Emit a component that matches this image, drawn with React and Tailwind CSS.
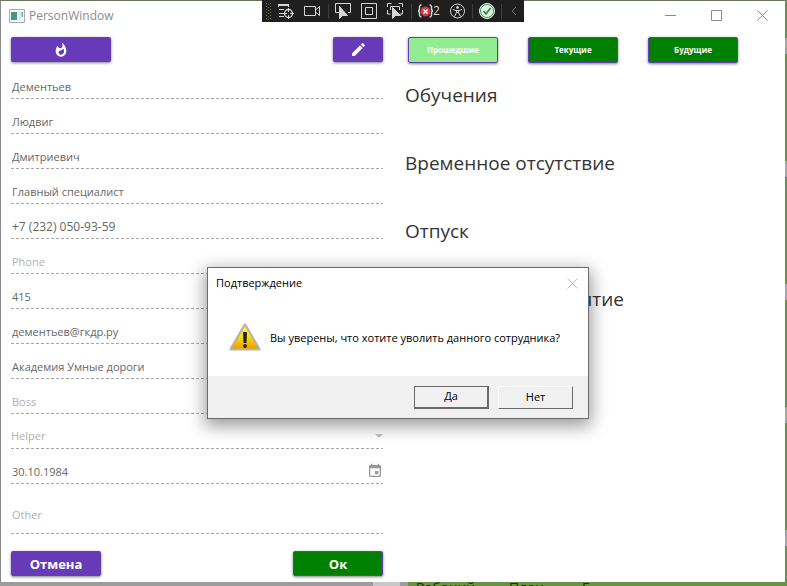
import React from "react";
import { MdWhatshot, MdEdit, MdInsertInvitation } from "react-icons/md";

const line =
  "h-px bg-[repeating-linear-gradient(90deg,#a8a8a8_0_3px,transparent_3px_5px)]";
const box = "h-5 w-full min-w-0 bg-transparent pl-px text-[#666] outline-none placeholder:text-[#b0b0b0]";

function Field({ label, value = "", type = "text", tall = false, children }) {
  return (
    <div className={tall ? "flex h-[50px] flex-col" : "flex h-[35px] flex-col"}>
      <div className={tall ? "flex flex-1 items-center pt-[11px]" : "flex flex-1 items-end pb-[2px]"}>
        {children || (
          <input
            type={type}
            aria-label={label}
            defaultValue={value}
            placeholder={label}
            className={`${box} ${type === "tel" ? "text-[12px]" : "text-[11px]"}`}
          />
        )}
      </div>
      <div className={line} />
    </div>
  );
}

function DebugToolbar() {
  return (
    <div className="absolute top-0 left-[262px] h-[22px] w-[262px] bg-[#1f1f1f]">
      <svg viewBox="0 0 262 22" className="h-full w-full" fill="none" stroke="#d6d6d6">
        <g stroke="#6b6b55" strokeDasharray="1 2">
          <path d="M4.5 3v17M8.5 3v17" />
          <path d="M6.5 4v16" />
        </g>
        <path d="M16.500 5.500h10M17 9.500h5M17 13.500h4M17 16.500h5M16.500 4v3M26.500 4v3" />
        <path d="M17 5h9" strokeWidth="2" />
        <circle cx="26.500" cy="13.500" r="4" strokeWidth="1.300" />
        <path d="M26.500 8v4M26.500 15v4M21 13.500h4M28 13.500h4" />
        <path d="M42.500 6.500h11v9h-11zM53.500 10l4-3.500v9l-4-3.500" />
        <path d="M66.500 4v15M149.500 4v15M210.500 4v15M239.500 4v15" stroke="#3d3d3d" />
        <path d="M78 12.500h-4.500v-9h15v9H86" />
        <path d="M77.500 6.500v12l3-3h5z" fill="#d6d6d6" />
        <path d="M99.500 3.500h15v15h-15zM103.500 7.500h7v7h-7z" />
        <path d="M125.500 7v-3.500h4M136.500 3.500h4V7M125.500 10v4h3M140.500 10v4h-3M128.500 10V6.500h9V10" />
        <path d="M130.500 7.500v11l3-3h5z" fill="#d6d6d6" />
        <path d="M159.500 5c-2 0-2 1-2 3s-.5 3-1.500 3c1 0 1.500 1 1.500 3s0 3 2 3M167.500 5c2 0 2 1 2 3s.5 3 1.500 3c-1 0-1.500 1-1.500 3s0 3-2 3" strokeWidth="1.500" />
        <circle cx="163.500" cy="11.500" r="5" fill="#d63a40" stroke="none" />
        <path d="M161.500 9.500l4 4M165.500 9.500l-4 4" stroke="#fff" strokeWidth="1.300" />
        <circle cx="195.500" cy="11" r="7" />
        <circle cx="195.500" cy="7.500" r="1" fill="#d6d6d6" />
        <path d="M191 9.500l3 1h3l3-1M194.500 10.500v2l-2 4M196.500 10.500v2l2 4M194.500 12.500h2" />
        <circle cx="225" cy="11" r="7.500" fill="#e5f5e5" stroke="#e5f5e5" />
        <circle cx="225" cy="11" r="6.500" stroke="#379a4a" />
        <path d="M221.500 11l2.500 3 4.500-6" stroke="#26853a" strokeWidth="1.600" />
        <path d="M254 7l-4 4 4 4" stroke="#707070" />
      </svg>
      <span className="absolute top-[2px] left-[171px] text-[12px] leading-[18px] text-[#d6d6d6]">2</span>
    </div>
  );
}

const raised = "rounded-[2px] shadow-[0_1px_3px_rgba(0,0,0,0.5)]";
const purple = "flex items-center justify-center bg-[#673ab7] text-white";
const filter = "h-[26px] w-[90px] border border-[#673ab7] text-[8px] font-bold text-white";

function Dialog() {
  return (
    <div
      role="dialog"
      aria-labelledby="dialog-title"
      className="absolute top-[267px] left-[207px] flex w-[382px] flex-col border border-[#6b6b6b] bg-white text-[11px] text-black shadow-[0_5px_16px_2px_rgba(0,0,0,0.4)]"
    >
      <header className="flex h-[30px] items-center justify-between pr-[10px] pl-2">
        <h2 id="dialog-title">Подтверждение</h2>
        <button aria-label="Закрыть">
          <svg width="11" height="11" viewBox="0 0 11 11" stroke="#bdbdbd">
            <path d="M.5 .5l10 10M10.500 .5l-10 10" />
          </svg>
        </button>
      </header>
      <div className="flex h-[78px] items-center gap-[9px] pl-[21px]">
        <svg width="32" height="28" viewBox="0 0 32 28">
          <defs>
            <linearGradient id="warning" x1="0" y1="0" x2="0" y2="1">
              <stop offset="0" stopColor="#fff36b" />
              <stop offset="0.500" stopColor="#f6dc10" />
              <stop offset="1" stopColor="#f39a00" />
            </linearGradient>
          </defs>
          <path d="M16 2L30 26H2z" fill="#b5b5b5" stroke="#b5b5b5" strokeWidth="3" strokeLinejoin="round" />
          <path d="M16 3L29 25.500H3z" fill="url(#warning)" stroke="#e3b51a" strokeWidth=".5" />
          <path d="M14 9h4l-.5 11h-3z" fill="#222" />
          <circle cx="16" cy="23" r="1.900" fill="#222" />
        </svg>
        <p className="pt-[2px]">Вы уверены, что хотите уволить данного сотрудника?</p>
      </div>
      <footer className="flex h-[42px] items-center justify-end gap-[9px] bg-[#f0f0f0] pr-[15px]">
        <button className="h-[23px] w-[75px] border border-r-2 border-b-2 border-[#696969] bg-[#f0f0f0]">Да</button>
        <button className="h-[23px] w-[75px] border border-t-white border-r-[#696969] border-b-[#696969] border-l-white bg-[#f0f0f0]">
          Нет
        </button>
      </footer>
    </div>
  );
}

export default function App() {
  return (
    <div className="relative flex h-screen flex-col overflow-hidden bg-[#669440] font-['Open_Sans','Noto_Sans',sans-serif]">
      <div className="flex min-h-0 flex-1">
        <main className="flex min-w-0 flex-1 flex-col border-t border-l border-t-[#67755a] border-l-[#8a8a8a] bg-white">
          <header className="flex h-[29px] items-center pl-2">
            <svg width="16" height="14" viewBox="0 0 16 14">
              <path d="M.5 .5h15v13H.5z" fill="#f4f7fa" stroke="#a3abb5" />
              <path d="M2 3h6v8H2z" fill="#4c9284" />
              <path d="M9.500 3h2v8h-2z" fill="#d9e2ee" />
              <path d="M12.500 3h1.500v5h-1.500z" fill="#74a7a0" />
            </svg>
            <h1 className="flex-1 pl-1 text-[12px] text-[#8c8c8c]">PersonWindow</h1>
            <div className="flex items-center gap-[35px] pr-[17px]">
              <button aria-label="Свернуть">
                <svg width="11" height="11" stroke="#8c8c8c"><path d="M0 5.500h11" /></svg>
              </button>
              <button aria-label="Развернуть">
                <svg width="11" height="11" fill="none" stroke="#8c8c8c"><path d="M.5 .5h10v10H.5z" /></svg>
              </button>
              <button aria-label="Закрыть окно">
                <svg width="11" height="11" stroke="#8c8c8c"><path d="M.5 .5l10 10M10.500 .5l-10 10" /></svg>
              </button>
            </div>
          </header>
          <div className="grid flex-1 grid-cols-2">
            <form className="flex flex-col px-[10px] pt-[7px]">
              <div className="flex justify-between pb-[2px]">
                <button type="button" aria-label="Уволить" className={`${raised} ${purple} h-[25px] w-[100px]`}>
                  <MdWhatshot size={16} />
                </button>
                <button type="button" aria-label="Изменить" className={`${raised} ${purple} h-[25px] w-[50px]`}>
                  <MdEdit size={17} />
                </button>
              </div>
              <Field label="Фамилия" value="Дементьев" />
              <Field label="Имя" value="Людвиг" />
              <Field label="Отчество" value="Дмитриевич" />
              <Field label="Должность" value="Главный специалист" />
              <Field label="Рабочий телефон" type="tel" value="+7 (232) 050-93-59" />
              <Field label="Phone" />
              <Field label="Кабинет" value="415" />
              <Field label="Почта" value="дементьев@гкдр.ру" />
              <Field label="Подразделение" value="Академия Умные дороги" />
              <Field label="Boss" />
              <Field label="Помощник">
                <select
                  aria-label="Помощник"
                  defaultValue=""
                  className="h-5 w-full appearance-none bg-transparent text-[11px] text-[#b0b0b0] outline-none"
                >
                  <option value="">Helper</option>
                </select>
                <svg width="8" height="4" className="mb-2 shrink-0"><path d="M0 0h8L4 4z" fill="#c4c4c4" /></svg>
              </Field>
              <Field label="Дата рождения">
                <input type="text" aria-label="Дата рождения" defaultValue="30.10.1984" className={`${box} text-[11px]`} />
                <MdInsertInvitation size={16} className="mb-[2px] shrink-0 text-[#999]" />
              </Field>
              <Field label="Other" tall />
              <div className="flex justify-between pt-[17px]">
                <button type="button" className={`${raised} ${purple} h-[25px] w-[90px] pt-[2px] text-[13px] font-bold`}>
                  Отмена
                </button>
                <button
                  type="button"
                  className={`${raised} flex h-[25px] w-[90px] items-center justify-center border border-[#673ab7] bg-[#008000] pt-[2px] text-[13px] font-bold text-white`}
                >
                  Ок
                </button>
              </div>
            </form>
            <section className="flex flex-col text-[19px] text-[#333]">
              <nav className="flex gap-[30px] pt-[7px] pl-[15px]">
                <button className={`${raised} ${filter} bg-[#90ee90]`}>Прошедшие</button>
                <button className={`${raised} ${filter} bg-[#008000]`}>Текущие</button>
                <button className={`${raised} ${filter} bg-[#008000]`}>Будущие</button>
              </nav>
              <div className="flex flex-col gap-10 pt-[18px] pl-3 leading-7">
                <h2>Обучения</h2>
                <h2>Временное отсутствие</h2>
                <h2>Отпуск</h2>
                <h2>Закрытое мероприятие</h2>
              </div>
            </section>
          </div>
        </main>
        <div className="flex w-[2px] flex-col gap-[107px] pt-[38px]">
          {[0, 1, 2, 3, 4].map((row) => (
            <div key={row} className="h-4 shrink-0 bg-[#a5a3ab]" />
          ))}
        </div>
      </div>
      <div className="flex h-1 overflow-hidden text-[14px] leading-3 text-[#1c2a12]">
        <div className="w-[373px] bg-[#9c9c9c]" />
        <div className="w-[27px] bg-[#c8c8c8]" />
        <div className="w-2 bg-[#9c9c9c]" />
        <p className="flex pl-2">
          <span className="w-[93px]">Рабочий</span>
          <span className="w-[73px]">План</span>
          <span>Е</span>
        </p>
      </div>
      <DebugToolbar />
      <Dialog />
    </div>
  );
}
